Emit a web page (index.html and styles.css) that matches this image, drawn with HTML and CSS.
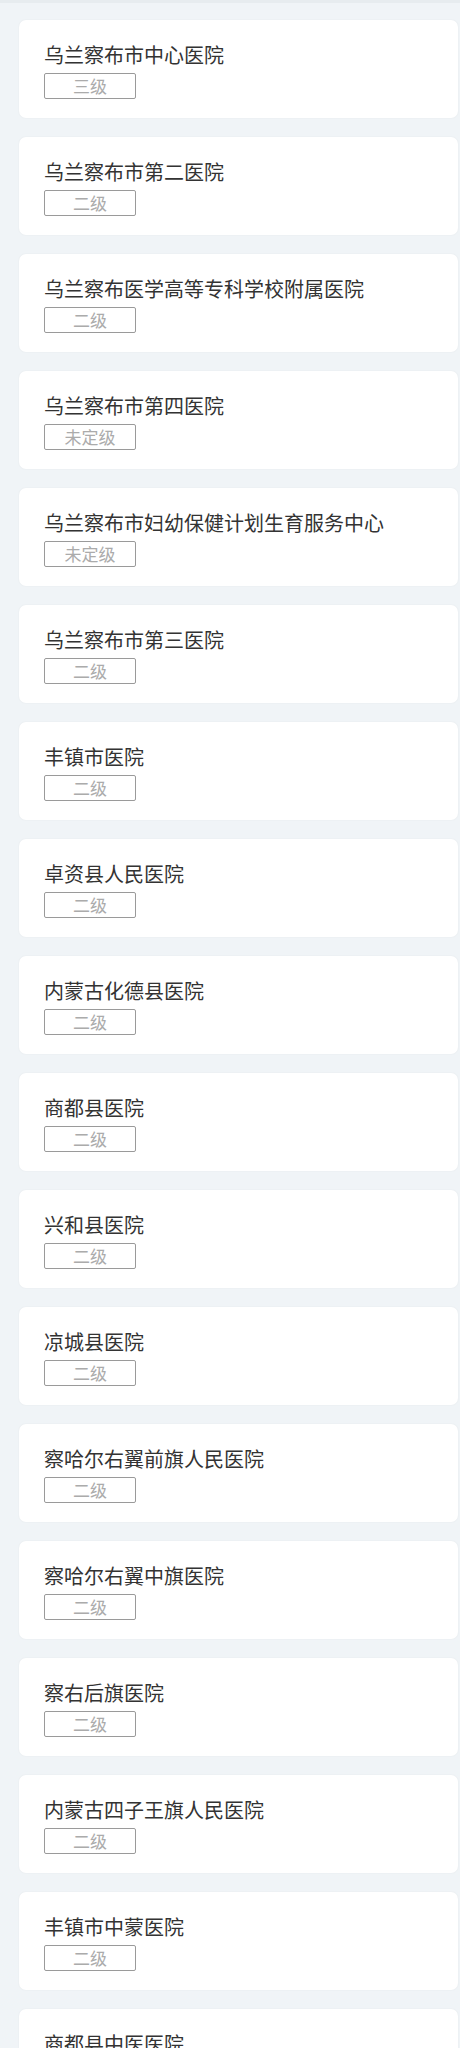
FILE: index.html
```html
<!DOCTYPE html>
<html lang="zh">
<head>
<meta charset="utf-8">
<link rel="stylesheet" href="styles.css">
</head>
<body>
<div class="topbar"></div>
<ul class="list">
  <li class="card"><div class="name">乌兰察布市中心医院</div><span class="level">三级</span></li>
  <li class="card"><div class="name">乌兰察布市第二医院</div><span class="level">二级</span></li>
  <li class="card"><div class="name">乌兰察布医学高等专科学校附属医院</div><span class="level">二级</span></li>
  <li class="card"><div class="name">乌兰察布市第四医院</div><span class="level">未定级</span></li>
  <li class="card"><div class="name">乌兰察布市妇幼保健计划生育服务中心</div><span class="level">未定级</span></li>
  <li class="card"><div class="name">乌兰察布市第三医院</div><span class="level">二级</span></li>
  <li class="card"><div class="name">丰镇市医院</div><span class="level">二级</span></li>
  <li class="card"><div class="name">卓资县人民医院</div><span class="level">二级</span></li>
  <li class="card"><div class="name">内蒙古化德县医院</div><span class="level">二级</span></li>
  <li class="card"><div class="name">商都县医院</div><span class="level">二级</span></li>
  <li class="card"><div class="name">兴和县医院</div><span class="level">二级</span></li>
  <li class="card"><div class="name">凉城县医院</div><span class="level">二级</span></li>
  <li class="card"><div class="name">察哈尔右翼前旗人民医院</div><span class="level">二级</span></li>
  <li class="card"><div class="name">察哈尔右翼中旗医院</div><span class="level">二级</span></li>
  <li class="card"><div class="name">察右后旗医院</div><span class="level">二级</span></li>
  <li class="card"><div class="name">内蒙古四子王旗人民医院</div><span class="level">二级</span></li>
  <li class="card"><div class="name">丰镇市中蒙医院</div><span class="level">二级</span></li>
  <li class="card"><div class="name">商都县中医医院</div><span class="level">二级</span></li>
</ul>
</body>
</html>
```
FILE: styles.css
```css
html, body {
  margin: 0;
  padding: 0;
  background: #f0f4f7;
  font-family: "Noto Sans CJK SC", "Noto Sans", sans-serif;
}
.topbar {
  height: 3px;
  background: #e7ecef;
}
.list {
  list-style: none;
  margin: 0;
  padding: 17px 2px 0 19px;
  display: flex;
  flex-direction: column;
  gap: 19px;
}
.card {
  background: #ffffff;
  border-radius: 7px;
  box-shadow: 0 0 2px rgba(0, 0, 0, 0.06);
  padding: 21px 25px 19px 25px;
  display: flex;
  flex-direction: column;
  align-items: flex-start;
  gap: 4px;
}
.name {
  font-size: 20px;
  line-height: 28px;
  color: #333333;
  white-space: nowrap;
}
.level {
  box-sizing: border-box;
  width: 92px;
  height: 26px;
  border: 1px solid #9a9a9a;
  border-radius: 2px;
  font-size: 17px;
  line-height: 24px;
  color: #ababab;
  text-align: center;
}
```
